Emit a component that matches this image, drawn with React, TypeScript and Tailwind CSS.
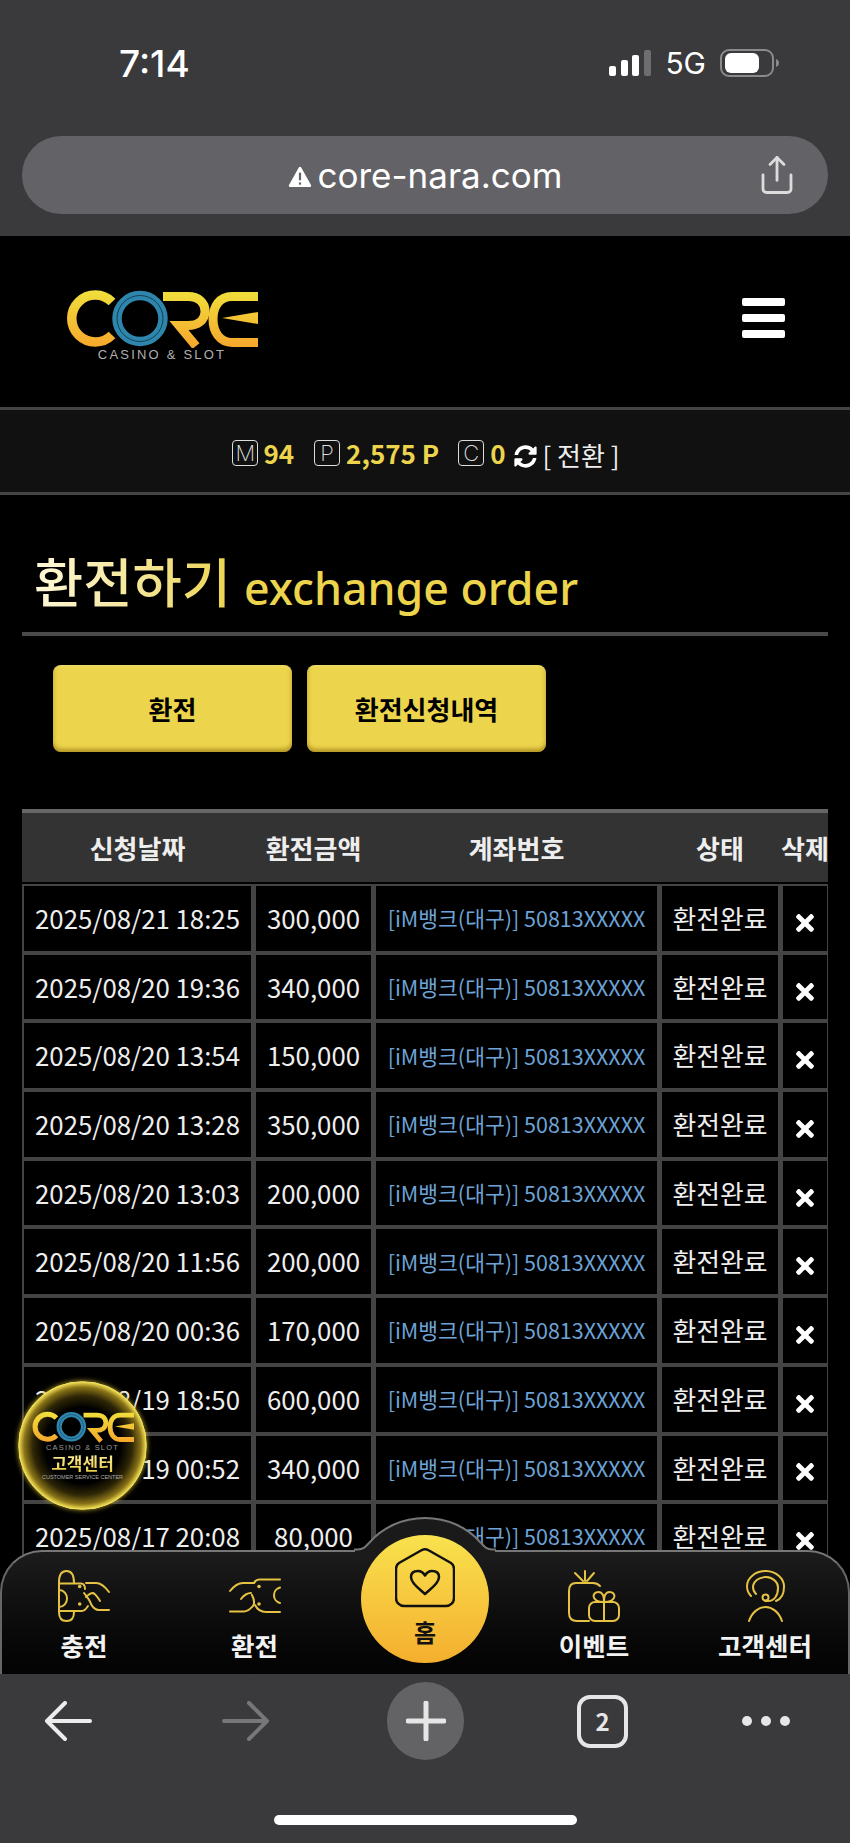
import { Share } from "lucide-react";
import { FaSyncAlt, FaTimes } from "react-icons/fa";

const rows = [
  ["2025/08/21 18:25", "300,000"],
  ["2025/08/20 19:36", "340,000"],
  ["2025/08/20 13:54", "150,000"],
  ["2025/08/20 13:28", "350,000"],
  ["2025/08/20 13:03", "200,000"],
  ["2025/08/20 11:56", "200,000"],
  ["2025/08/20 00:36", "170,000"],
  ["2025/08/19 18:50", "600,000"],
  ["2025/08/19 00:52", "340,000"],
  ["2025/08/17 20:08", "80,000"],
  ["2025/08/17 18:20", "120,000"],
];

function PointBox({ letter }: { letter: string }) {
  return (
    <span className="flex h-[26px] w-[26px] shrink-0 items-center justify-center rounded-[4px] border border-[#ddd] font-['Inter',sans-serif] text-[22px] font-extralight text-[#ddd]">
      {letter}
    </span>
  );
}

function CoreLogo({ className }: { className?: string }) {
  return (
    <svg viewBox="0 0 192 58" className={className} fill="none">
      <defs>
        <linearGradient id="lg" gradientUnits="userSpaceOnUse" x1="0" y1="0" x2="0" y2="58">
          <stop offset="0" stopColor="#f0e03c" />
          <stop offset="1" stopColor="#f6a62c" />
        </linearGradient>
      </defs>
      <path d="M46 12A23.500 23.500 0 1 0 46 45" stroke="url(#lg)" strokeWidth="9.500" />
      <path d="M97 6.500H122C133 6.500 139 13 139 21C139 31 131 35.500 122 35.500H113L130 56" stroke="url(#lg)" strokeWidth="9" />
      <path d="M192 6.500H166C153 6.500 147 17 147 29C147 42 154 52.500 166 52.500H192" stroke="url(#lg)" strokeWidth="9" />
      <path d="M192 22V34L156 28z" fill="url(#lg)" />
      <circle cx="74" cy="28.500" r="23" stroke="#2f86ad" strokeWidth="9.500" />
      <circle cx="74" cy="28.500" r="23" stroke="#123e55" strokeWidth="1" />
    </svg>
  );
}

function ChargeIcon() {
  return (
    <svg width="52" height="52" viewBox="0 0 52 52" fill="none" stroke="#e6c244" strokeWidth="2" strokeLinecap="round" strokeLinejoin="round">
      <path d="M1 12V42C1 48 4 51 8.500 51C13 51 16 48 16 42" />
      <path d="M1 12C1 4 4 1 8.500 1C13 1 16 4 16 13" />
      <path d="M1 13.500H23C26 13.500 27 16 27 19" />
      <path d="M1 41H24C27 41 28 39 30 36" />
      <path d="M1 20C6 20 9 24 9 28.500C9 33 6 37 1 37" />
      <circle cx="21.700" cy="16.500" r="1.800" fill="#e6c244" stroke="none" />
      <circle cx="21.700" cy="34" r="1.800" fill="#e6c244" stroke="none" />
      <path d="M28 13H38C43 13 48 18 51 22" />
      <path d="M28 27C30 25 33 23 35 23C38 24 40 28 42 31" />
      <path d="M26 23C29 27 32 30 33 34C35 38 37 40 41 40H51" />
    </svg>
  );
}

function ExchangeIcon() {
  return (
    <svg width="52" height="36" viewBox="0 0 52 36" fill="none" stroke="#e6c244" strokeWidth="2" strokeLinecap="round" strokeLinejoin="round">
      <path d="M51 1.500H30C27 1.500 26 3 25 5" />
      <path d="M1 13C5 8 9 5 14 5H25" />
      <path d="M1 33.500H15C19 33.500 21 31 24 28C26 25 25 21 23 17" />
      <path d="M12 21C15 17 19 15 22 15" />
      <path d="M51 34H37C31 34 28 31 26 27" />
      <path d="M51 9.500A8 8 0 0 0 51 25" />
      <circle cx="30" cy="8.500" r="1.800" fill="#e6c244" stroke="none" />
      <circle cx="30" cy="26" r="1.800" fill="#e6c244" stroke="none" />
    </svg>
  );
}

function HomeIcon() {
  return (
    <svg width="60" height="60" viewBox="0 0 60 60" fill="none" stroke="#111" strokeWidth="2.500" strokeLinejoin="round">
      <path d="M26 2.500Q30 0 34 2.500L56 15Q59 17 59 21V50A8 8 0 0 1 51 58H9A8 8 0 0 1 1 50V21Q1 17 4 15Z" />
      <path d="M30 46C26 42 16 36 16 29C16 25 19 23 23 23C26 23 28.500 25 30 27.500C31.500 25 34 23 37 23C41 23 44 25 44 29C44 36 34 42 30 46Z" />
    </svg>
  );
}

function EventIcon() {
  return (
    <svg width="52" height="52" viewBox="0 0 52 52" fill="none" stroke="#e6c244" strokeWidth="2" strokeLinecap="round" strokeLinejoin="round">
      <path d="M32 16C30 14 27 13 25 13H8C3 13 1 16 1 21V43C1 48 4 51 9 51H21" />
      <path d="M17 1V11M7 3L15 11M26 3L19 11" />
      <rect x="21" y="32" width="30" height="19" rx="6" />
      <path d="M36 32V51" />
      <path d="M36 32C32 32 26 31 25.500 26C26 22 32 20 35 25C36 27 36 30 36 32C36 30 36 27 37 25C40 20 46 22 46.500 26C46 31 40 32 36 32Z" />
    </svg>
  );
}

function SupportIcon() {
  return (
    <svg width="39" height="52" viewBox="0 0 39 52" fill="none" stroke="#e6c244" strokeWidth="2" strokeLinecap="round" strokeLinejoin="round">
      <path d="M5 26C2 23 1 19 1 16A18 15 0 0 1 38 17C38 24 35 29 30 31" />
      <path d="M10 24C8 22 7 19 7 17A12 10 0 0 1 32 18C32 26 28 31 22 31H19" />
      <circle cx="19.500" cy="27.500" r="3" />
      <path d="M3 51C6 42 13 37 19.500 37C26 37 33 42 36 51" />
    </svg>
  );
}

function ArrowIcon({ flip, color }: { flip?: boolean; color: string }) {
  return (
    <svg width="48" height="40" viewBox="0 0 48 40" fill="none" stroke={color} strokeWidth="4" strokeLinecap="round" strokeLinejoin="round" className={flip ? "-scale-x-100" : ""}>
      <path d="M3 20H46M21 2L3 20L21 38" />
    </svg>
  );
}

function NavItem({ label, icon }: { label: string; icon: React.ReactNode }) {
  return (
    <div className="flex flex-col items-center">
      <div className="flex h-[53px] items-center">{icon}</div>
      <span className="mt-[6px] whitespace-nowrap text-[25.500px] leading-[34px] font-bold text-[#f2f2f2]">{label}</span>
    </div>
  );
}

export default function App() {
  return (
    <div className="flex h-[1843px] w-[850px] flex-col overflow-hidden bg-black font-['Noto_Sans_CJK_KR','Noto_Sans',sans-serif]">
      {/* Status bar and address bar */}
      <div className="h-[236px] shrink-0 bg-[#3a393b] px-[22px]">
        <div className="flex h-[136px] items-start justify-between pl-[97px] pr-[48px] pt-[41px]">
          <span className="font-['Inter',sans-serif] text-[37px] leading-[45px] font-medium text-white">7:14</span>
          <div className="flex items-center gap-[14px] pt-[6px]">
            <svg width="42" height="28" viewBox="0 0 42 28">
              <rect x="0" y="17" width="7" height="10" rx="2" fill="#fff" />
              <rect x="12" y="11" width="7" height="16" rx="2" fill="#fff" />
              <rect x="23" y="6" width="7" height="21" rx="2" fill="#fff" />
              <rect x="35" y="1" width="7" height="26" rx="2" fill="#6e6e70" />
            </svg>
            <span className="font-['Inter',sans-serif] text-[30px] leading-[32px] text-white">5G</span>
            <svg width="60" height="28" viewBox="0 0 60 28">
              <rect x="1" y="1" width="52" height="26" rx="8" stroke="#8a8a8c" strokeWidth="2" fill="none" />
              <rect x="5" y="4" width="34" height="20" rx="6" fill="#fff" />
              <path d="M56 10c2 1 3 2 3 4s-1 3-3 4z" fill="#8a8a8c" />
            </svg>
          </div>
        </div>
        <div className="relative flex h-[78px] items-center justify-center rounded-[39px] bg-[#636367]">
          <svg width="24" height="22" viewBox="0 0 22 20" className="mr-[6px] mt-[3px]">
            <path d="M11 2 20 18H2z" fill="#fff" stroke="#fff" strokeWidth="2.500" strokeLinejoin="round" />
            <rect x="10" y="6" width="2" height="7" fill="#636367" />
            <rect x="10" y="15" width="2" height="2" fill="#636367" />
          </svg>
          <span className="font-['Inter',sans-serif] text-[35px] leading-none text-white">core-nara.com</span>
          <Share className="absolute right-[30px] h-[42px] w-[42px] text-[#dcdcdc]" strokeWidth={1.6} />
        </div>
      </div>

      {/* Page */}
      <div className="relative min-h-0 flex-1 overflow-hidden">
        <header className="flex h-[171px] items-start justify-between pl-[66px] pr-[65px] pt-[54px]">
          <div className="flex flex-col items-center">
            <CoreLogo className="h-[58px] w-[192px]" />
            <span className="font-['Liberation_Sans',sans-serif] text-[13px] leading-[14px] tracking-[2.200px] text-[#b0b0b0]">
              CASINO &amp; SLOT
            </span>
          </div>
          <div className="mt-[8px] flex w-[43px] flex-col gap-[8px]">
            <span className="h-[8px] rounded-[2px] bg-white" />
            <span className="h-[8px] rounded-[2px] bg-white" />
            <span className="h-[8px] rounded-[2px] bg-white" />
          </div>
        </header>

        {/* Points */}
        <div className="flex h-[88px] items-center justify-center border-y-[3px] border-y-[#444] bg-[#111] pl-[2px] pt-[4px] text-[26px] font-bold text-[#ecd44c]">
          <PointBox letter="M" />
          <span className="ml-[5px] leading-none">94</span>
          <span className="ml-[20px]"><PointBox letter="P" /></span>
          <span className="ml-[6px] leading-none">2,575 P</span>
          <span className="ml-[19px]"><PointBox letter="C" /></span>
          <span className="ml-[6px] leading-none">0</span>
          <FaSyncAlt className="ml-[8px] mt-[6px] h-[23px] w-[23px] text-white" />
          <span className="ml-[6px] mt-[4px] text-[26px] leading-none font-normal text-[#eee]">[ 전환 ]</span>
        </div>

        {/* Title */}
        <div className="mx-[22px] mt-[53px] flex h-[88px] items-start border-b-[4px] border-b-[#4a4a4a] pl-[12px]">
          <h1 className="bg-gradient-to-r from-[#fff8d8] to-[#ecd44c] bg-clip-text text-[53.500px] leading-[64px] font-medium text-transparent">
            환전하기
          </h1>
          <span className="ml-[13px] pt-[8px] font-['Noto_Sans',sans-serif] text-[44.700px] leading-[64px] font-medium text-[#ecd44c]">
            exchange order
          </span>
        </div>

        {/* Tabs */}
        <div className="ml-[53px] mt-[29px] flex gap-[15px]">
          <button className="h-[87px] w-[239px] rounded-[8px] bg-[#ecd44c] text-[26px] font-bold text-black shadow-[inset_0_-3px_4px_rgba(130,95,0,0.55),inset_0_2px_2px_rgba(255,255,210,0.2)]">
            환전
          </button>
          <button className="h-[87px] w-[239px] rounded-[8px] bg-[#ecd44c] text-[26px] font-bold text-black shadow-[inset_0_-3px_4px_rgba(130,95,0,0.55),inset_0_2px_2px_rgba(255,255,210,0.2)]">
            환전신청내역
          </button>
        </div>

        {/* History table */}
        <div className="mx-[22px] mt-[57px]">
          <div className="grid h-[73px] grid-cols-[231px_121px_285px_122px_47px] items-center whitespace-nowrap border-t-[4px] border-t-[#666] bg-[#333] text-center text-[26px] font-bold text-[#eee]">
            <span>신청날짜</span>
            <span>환전금액</span>
            <span>계좌번호</span>
            <span>상태</span>
            <span>삭제</span>
          </div>
          <div className="mt-[2px] grid grid-cols-[227px_115px_281px_116px_44px] gap-x-[5px] gap-y-[4px] bg-[#444] py-[2px] pl-[2px] pr-[1px] text-center text-[25.800px] text-[#eee]">
            {rows.map((r) => (
              <div key={r[0]} className="contents">
                <div className="flex h-[64.7px] items-center justify-center bg-black">{r[0]}</div>
                <div className="flex h-[64.7px] items-center justify-center bg-black">{r[1]}</div>
                <div className="flex h-[64.7px] items-center justify-center bg-black text-[21.500px] text-[#6da3d6]">
                  [iM뱅크(대구)] 50813XXXXX
                </div>
                <div className="flex h-[64.7px] items-center justify-center bg-black">환전완료</div>
                <div className="flex h-[64.7px] items-center justify-center bg-black">
                  <FaTimes className="mt-[9px] h-[26px] w-[26px] text-white" />
                </div>
              </div>
            ))}
          </div>
        </div>

        {/* Floating customer center badge */}
        <div className="absolute left-[18px] top-[1145px] flex h-[129px] w-[129px] flex-col items-center justify-center rounded-full border border-[#f0e060] bg-[radial-gradient(circle_closest-side,#000_60%,#2e2606_78%,#8a7418_92%,#f0dc50_100%)] shadow-[0_0_5px_#b8a028]">
          <CoreLogo className="h-[32px] w-[102px]" />
          <span className="font-['Liberation_Sans',sans-serif] text-[7.500px] leading-[9px] tracking-[1.200px] text-[#999]">CASINO &amp; SLOT</span>
          <span className="bg-gradient-to-b from-[#fff2a0] to-[#e8c83c] bg-clip-text text-[17px] leading-[22px] font-bold text-transparent">고객센터</span>
          <span className="font-['Liberation_Sans',sans-serif] text-[5.500px] leading-[7px] text-[#aaa]">CUSTOMER SERVICE CENTER</span>
        </div>

        {/* Bottom nav */}
        <div className="absolute inset-x-0 bottom-0 grid h-[124px] grid-cols-[164px_177px_164px_174px_168px] rounded-t-[42px] border-x-[2px] border-t-[2px] border-x-[#666] border-t-[#777] bg-gradient-to-b from-[#1c1c1c] to-[#030303] pt-[17px]">
          <svg width="150" height="38" viewBox="0 0 150 38" className="absolute left-[348px] top-[-36px]">
            <path d="M5 38V33.500H8C14 33.500 16 30 20 26C32 12 52 2 75 2C98 2 118 12 130 26C134 30 136 33.500 142 33.500H145V38Z" fill="#1a1a1a" />
            <path d="M4 33.500H8C14 33.500 16 30 20 26C32 12 52 2 75 2C98 2 118 12 130 26C134 30 136 33.500 142 33.500H146" fill="none" stroke="#777" strokeWidth="2" />
          </svg>
          <NavItem label="충전" icon={<ChargeIcon />} />
          <NavItem label="환전" icon={<ExchangeIcon />} />
          <div className="relative -mt-[34px] flex justify-center">
            <div className="flex h-[128px] w-[128px] flex-col items-center rounded-full bg-gradient-to-b from-[#f8e24d] to-[#f4ae2e] pt-[13px]">
              <HomeIcon />
              <span className="mt-[9px] text-[24px] leading-[30px] font-bold text-[#111]">홈</span>
            </div>
          </div>
          <NavItem label="이벤트" icon={<EventIcon />} />
          <NavItem label="고객센터" icon={<SupportIcon />} />
        </div>
      </div>

      {/* Browser toolbar */}
      <div className="h-[169px] shrink-0 bg-[#3a393b]">
        <div className="flex h-[94px] items-center pl-[44px]">
          <ArrowIcon color="#ececec" />
          <span className="ml-[130px]"><ArrowIcon flip color="#77777a" /></span>
          <div className="ml-[117px] flex h-[78px] w-[77px] items-center justify-center rounded-full bg-[#636365]">
            <svg width="40" height="40" viewBox="0 0 40 40" fill="none" stroke="#e6e6e6" strokeWidth="5" strokeLinecap="round">
              <path d="M20 2V38M2 20H38" />
            </svg>
          </div>
          <div className="ml-[113px] flex h-[53px] w-[51px] items-center justify-center rounded-[13px] border-[4px] border-[#e6e6e6] text-[24px] leading-none font-bold text-[#e6e6e6]">
            2
          </div>
          <div className="ml-[114px] flex w-[48px] items-center justify-between">
            <span className="h-[10px] w-[10px] rounded-full bg-[#e6e6e6]" />
            <span className="h-[10px] w-[10px] rounded-full bg-[#e6e6e6]" />
            <span className="h-[10px] w-[10px] rounded-full bg-[#e6e6e6]" />
          </div>
        </div>
        <div className="ml-[274px] mt-[47px] h-[10px] w-[303px] rounded-full bg-white" />
      </div>
    </div>
  );
}
